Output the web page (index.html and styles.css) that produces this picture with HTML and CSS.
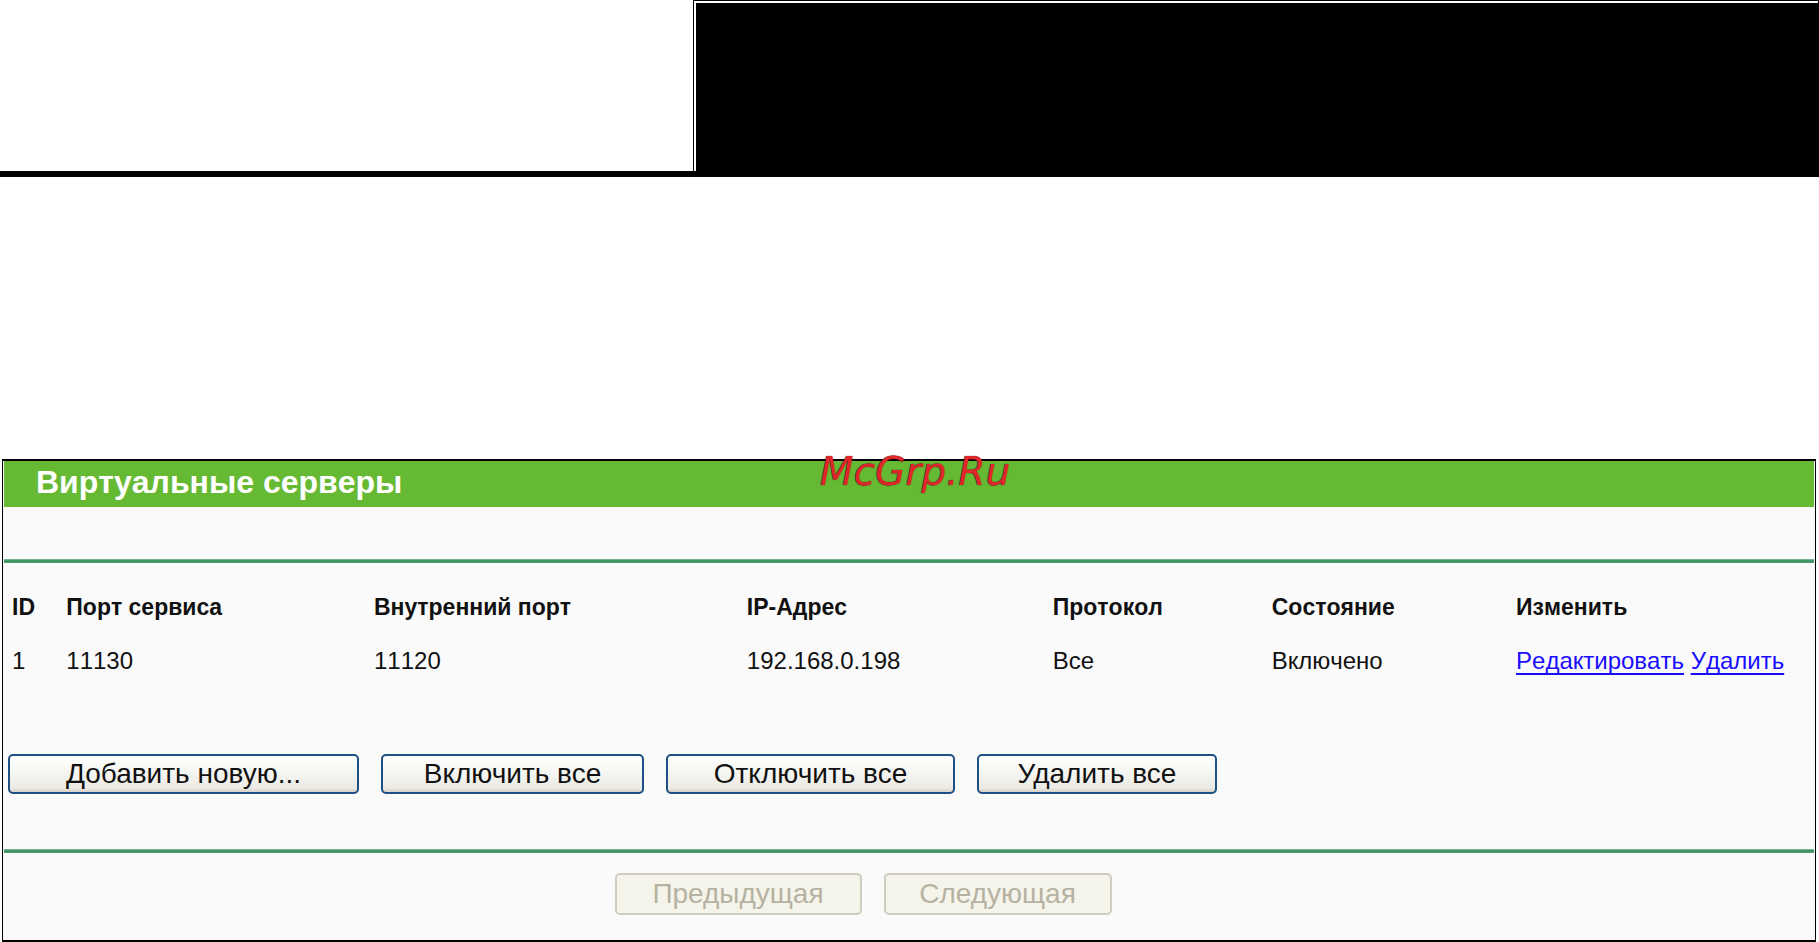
FILE: index.html
```
<!DOCTYPE html>
<html lang="ru">
<head>
  <meta charset="UTF-8">
  <meta name="viewport" content="width=device-width, initial-scale=1.0"/>
  <title>Виртуальные серверы</title>
  <link rel="stylesheet" href="styles.css">
</head>
<body>

  <header class="top">
    <div class="top-box"></div>
  </header>

  <main class="panel">
    <div class="title-bar">
      <h1>Виртуальные серверы</h1>
      <span class="watermark">McGrp.Ru</span>
    </div>

    <hr class="line-top">

    <table class="servers">
      <colgroup>
        <col class="col-id">
        <col class="col-port">
        <col class="col-inner">
        <col class="col-ip">
        <col class="col-protocol">
        <col class="col-state">
        <col>
      </colgroup>
      <thead>
        <tr>
          <th>ID</th>
          <th>Порт сервиса</th>
          <th>Внутренний порт</th>
          <th>IP-Адрес</th>
          <th>Протокол</th>
          <th>Состояние</th>
          <th>Изменить</th>
        </tr>
      </thead>
      <tbody>
        <tr>
          <td>1</td>
          <td>11130</td>
          <td>11120</td>
          <td>192.168.0.198</td>
          <td>Все</td>
          <td>Включено</td>
          <td><a href="#edit">Редактировать</a> <a href="#delete">Удалить</a></td>
        </tr>
      </tbody>
    </table>

    <div class="actions">
      <button class="add">Добавить новую...</button>
      <button class="enable">Включить все</button>
      <button class="disable">Отключить все</button>
      <button class="delete">Удалить все</button>
    </div>

    <hr>

    <div class="pager">
      <button class="prev" disabled>Предыдущая</button>
      <button class="next" disabled>Следующая</button>
    </div>
  </main>

</body>
</html>
```
FILE: styles.css
```
* {
  margin: 0;
  padding: 0;
  box-sizing: border-box;
}

body {
  background: #fff;
  color: #111;
  font-family: "Liberation Sans", Arial, sans-serif;
  font-size: 24px;
  font-kerning: none;
}

/* page header */
.top {
  display: flex;
  justify-content: flex-end;
  height: 177px;
  border-bottom: 6px solid #000;
}

.top-box {
  width: 61.9%;
  border: 1px solid #000;
  border-bottom: 0;
  background: #000;
  box-shadow: inset 2px 2px 0 #fff;
}

/* router panel */
.panel {
  margin: 282px 3px 0 2px;
  padding: 0 1px 25px;
  border: 1px solid #000;
  border-width: 2px 1px;
  background: #fafafa;
}

.title-bar {
  position: relative;
  height: 46px;
  padding-left: 32px;
  background: #66b933;
}

h1 {
  color: #fff;
  font-size: 32px;
  line-height: 42px;
}

.watermark {
  position: absolute;
  top: -13px;
  left: 0;
  right: 0;
  padding-left: 12px;
  text-align: center;
  color: #e0262a;
  font-family: "DejaVu Sans", sans-serif;
  font-size: 39px;
  font-style: italic;
  line-height: 48px;
  text-shadow: 0 0 1px #000;
}

hr {
  height: 4px;
  border: 0;
  background: linear-gradient(#8fbfa5, #2e8b57, #5fa580);
}

.line-top {
  margin-top: 52px;
}

.servers {
  width: 100%;
  margin-top: 17px;
  border-collapse: collapse;
  table-layout: fixed;
}

th,
td {
  height: 54px;
  padding-left: 8px;
  text-align: left;
  white-space: nowrap;
}

th {
  font-size: 23px;
}

.col-id { width: 3%; }
.col-port { width: 17%; }
.col-inner { width: 20.6%; }
.col-ip { width: 16.9%; }
.col-protocol { width: 12.1%; }
.col-state { width: 13.5%; }

a {
  color: #1a0dff;
  text-decoration-thickness: 2px;
  text-decoration-skip-ink: none;
  text-underline-offset: 4px;
}

.actions,
.pager {
  display: flex;
  gap: 22px;
}

.actions {
  margin: 66px 0 55px;
  padding-left: 4px;
}

.pager {
  justify-content: center;
  margin-top: 20px;
  padding-right: 92px;
}

button {
  height: 40px;
  border: 2px solid #1d5083;
  border-radius: 5px;
  background: linear-gradient(#fff, #f4f4f0 50%, #ecebe6 88%, #d8d2c8);
  color: #111;
  font-family: inherit;
  font-size: 28px;
  line-height: 34px;
  cursor: pointer;
}

button:disabled {
  height: 42px;
  border-color: #cfcdbd;
  background: #f5f4ea;
  color: #b5b2a2;
  cursor: default;
}

.add { width: 351px; }
.enable { width: 263px; }
.disable { width: 289px; }
.delete { width: 240px; }
.prev { width: 247px; }
.next { width: 228px; }
```
